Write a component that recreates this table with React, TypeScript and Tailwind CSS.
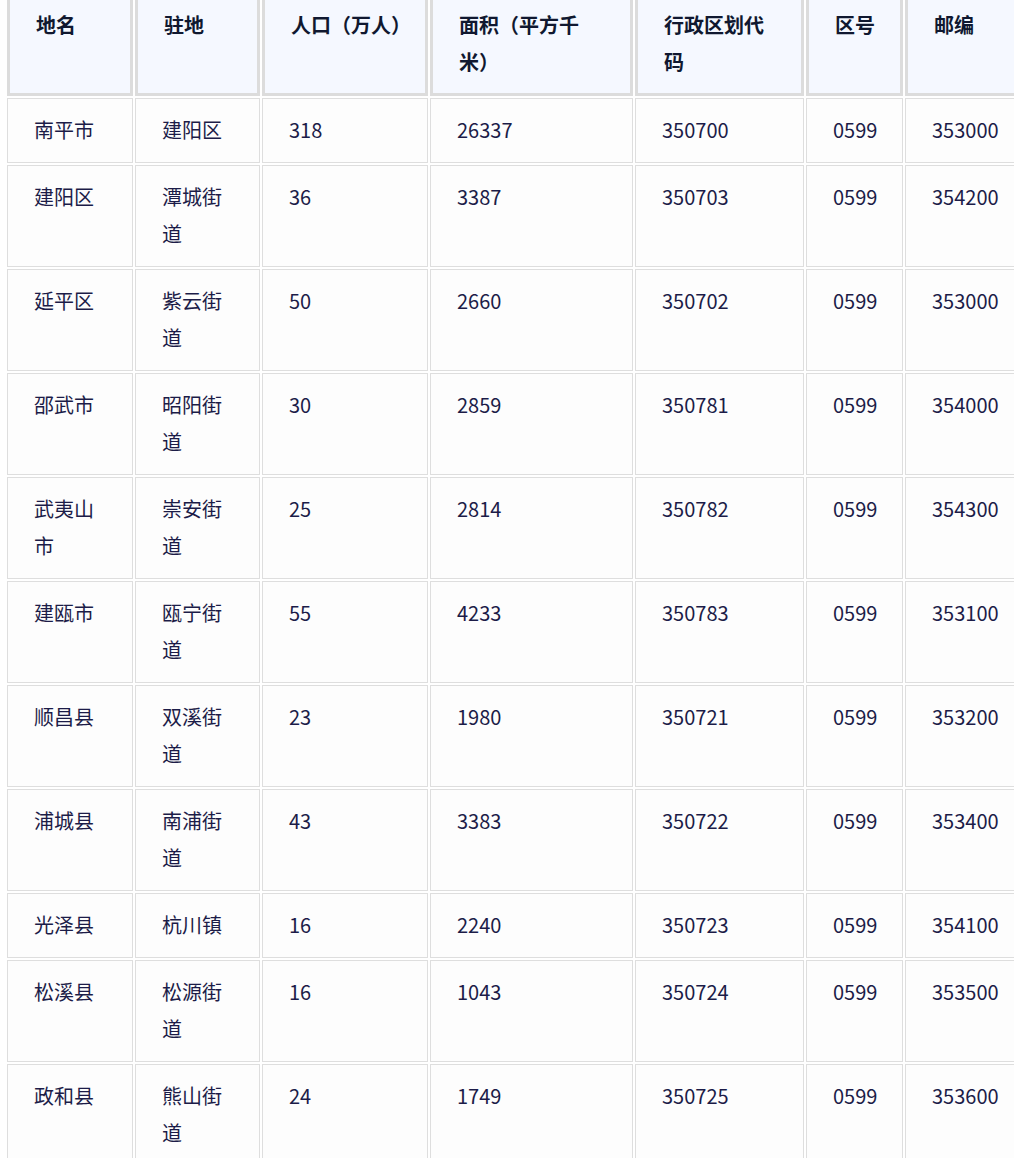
import React from "react";

const headers = ["地名", "驻地", "人口（万人）", "面积（平方千米）", "行政区划代码", "区号", "邮编"];

const rows: string[][] = [
  ["南平市", "建阳区", "318", "26337", "350700", "0599", "353000"],
  ["建阳区", "潭城街道", "36", "3387", "350703", "0599", "354200"],
  ["延平区", "紫云街道", "50", "2660", "350702", "0599", "353000"],
  ["邵武市", "昭阳街道", "30", "2859", "350781", "0599", "354000"],
  ["武夷山市", "崇安街道", "25", "2814", "350782", "0599", "354300"],
  ["建瓯市", "瓯宁街道", "55", "4233", "350783", "0599", "353100"],
  ["顺昌县", "双溪街道", "23", "1980", "350721", "0599", "353200"],
  ["浦城县", "南浦街道", "43", "3383", "350722", "0599", "353400"],
  ["光泽县", "杭川镇", "16", "2240", "350723", "0599", "354100"],
  ["松溪县", "松源街道", "16", "1043", "350724", "0599", "353500"],
  ["政和县", "熊山街道", "24", "1749", "350725", "0599", "353600"],
];

const widths = ["w-[126px]", "w-[125px]", "w-[166px]", "w-[203px]", "w-[169px]", "w-[97px]", "w-[130px]"];

export default function App() {
  return (
    <div
      className="w-[1014px] h-[1158px] overflow-hidden bg-white"
      style={{ fontFamily: '"Noto Sans CJK SC", "Noto Sans", sans-serif' }}
    >
      <table className="table-fixed border-separate border-spacing-[2px] ml-[5px] -mt-[12px] w-[1032px] text-[20px] leading-[37px]">
        <colgroup>
          {widths.map((w, i) => (
            <col key={i} className={w} />
          ))}
        </colgroup>
        <thead>
          <tr>
            {headers.map((h, i) => (
              <th
                key={i}
                className={`${widths[i]} border-[3px] border-[#dcdcdc] bg-[#f5f8ff] pl-[26px] pr-[23px] py-[13px] text-left align-top font-semibold text-[#101830]`}
              >
                {h}
              </th>
            ))}
          </tr>
        </thead>
        <tbody>
          {rows.map((r, ri) => (
            <tr key={ri}>
              {r.map((c, ci) => (
                <td
                  key={ci}
                  className={`${widths[ci]} border border-[#dedede] bg-[#fdfdfd] pl-[26px] pr-[23px] pt-[12px] pb-[14px] text-left align-top text-[#1c1c48]`}
                >
                  {c}
                </td>
              ))}
            </tr>
          ))}
        </tbody>
      </table>
    </div>
  );
}
